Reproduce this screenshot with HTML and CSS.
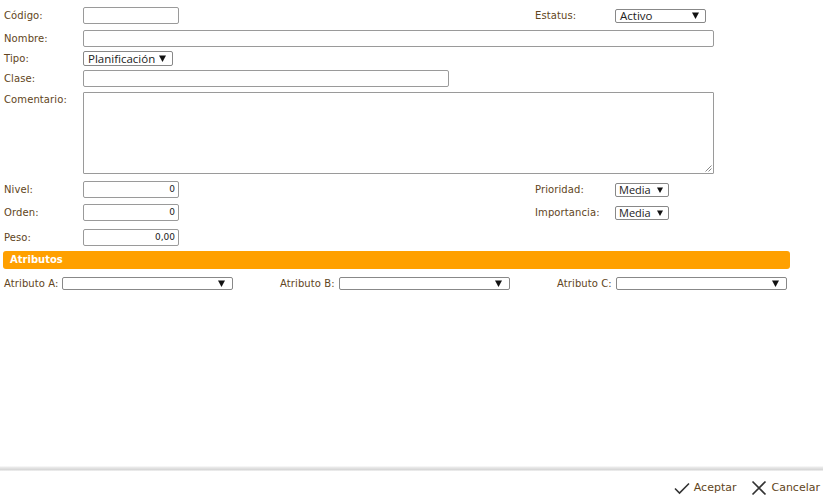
FILE: index.html
```html
<!DOCTYPE html>
<html lang="es">
<head>
<meta charset="utf-8">
<title>Formulario</title>
<link rel="stylesheet" href="styles.css">
</head>
<body>
<div class="page">
  <main class="form">
    <div class="row r1">
      <label class="lbl">Código:</label>
      <div class="cell"><span class="input w96"></span></div>
      <label class="lbl">Estatus:</label>
      <div class="cell"><span class="select w91"><span class="val">Activo</span><svg class="arr" viewBox="0 0 7 7"><path d="M0 0.5H7L3.5 7Z"/></svg></span></div>
    </div>
    <div class="row r2">
      <label class="lbl">Nombre:</label>
      <div class="cell span3"><span class="input w631"></span></div>
    </div>
    <div class="row r3">
      <label class="lbl">Tipo:</label>
      <div class="cell"><span class="select w90 h15"><span class="val">Planificación</span><svg class="arr" viewBox="0 0 7 7"><path d="M0 0.5H7L3.5 7Z"/></svg></span></div>
    </div>
    <div class="row r4">
      <label class="lbl">Clase:</label>
      <div class="cell span3"><span class="input w366"></span></div>
    </div>
    <div class="row r5">
      <label class="lbl top">Comentario:</label>
      <div class="cell span3"><span class="textarea"><svg class="grip" viewBox="0 0 8 8"><path d="M7.5 1.5L1.5 7.5M7.5 4.5L4.5 7.5" stroke="#888" stroke-width="1" fill="none"/></svg></span></div>
    </div>
    <div class="row r6">
      <label class="lbl">Nivel:</label>
      <div class="cell"><span class="input w96 num">0</span></div>
      <label class="lbl">Prioridad:</label>
      <div class="cell"><span class="select w54"><span class="val">Media</span><svg class="arr" viewBox="0 0 7 7"><path d="M0 0.5H7L3.5 7Z"/></svg></span></div>
    </div>
    <div class="row r7">
      <label class="lbl">Orden:</label>
      <div class="cell"><span class="input w96 num">0</span></div>
      <label class="lbl">Importancia:</label>
      <div class="cell"><span class="select w54"><span class="val">Media</span><svg class="arr" viewBox="0 0 7 7"><path d="M0 0.5H7L3.5 7Z"/></svg></span></div>
    </div>
    <div class="row r8">
      <label class="lbl">Peso:</label>
      <div class="cell"><span class="input w96 num">0,00</span></div>
    </div>
    <div class="bar">Atributos</div>
    <div class="attrs">
      <div class="attr a1">
        <label class="lbl2">Atributo A:</label>
        <span class="select w171 h13"><span class="val"></span><svg class="arr" viewBox="0 0 7 7"><path d="M0 0.5H7L3.5 7Z"/></svg></span>
      </div>
      <div class="attr a2">
        <label class="lbl2">Atributo B:</label>
        <span class="select w171 h13"><span class="val"></span><svg class="arr" viewBox="0 0 7 7"><path d="M0 0.5H7L3.5 7Z"/></svg></span>
      </div>
      <div class="attr a3">
        <label class="lbl2">Atributo C:</label>
        <span class="select w171 h13"><span class="val"></span><svg class="arr" viewBox="0 0 7 7"><path d="M0 0.5H7L3.5 7Z"/></svg></span>
      </div>
    </div>
  </main>
  <footer class="footer">
    <div class="actions">
      <span class="btn"><svg class="ico" viewBox="0 0 16 16"><path d="M1 8.5L5.5 13L15 3.5" stroke="#333" stroke-width="1.6" fill="none"/></svg>Aceptar</span>
      <span class="btn"><svg class="ico" viewBox="0 0 16 16"><path d="M1.5 1.5L14.5 14.5M14.5 1.5L1.5 14.5" stroke="#333" stroke-width="1.7" fill="none"/></svg>Cancelar</span>
    </div>
  </footer>
</div>
</body>
</html>
```
FILE: styles.css
```css
html, body {
  margin: 0;
  padding: 0;
  background: #fff;
}
body {
  font-family: "DejaVu Sans", Verdana, sans-serif;
  font-size: 10px;
  letter-spacing: 0.1px;
  color: #614521;
}
.page {
  display: flex;
  flex-direction: column;
  height: 501px;
}
.form {
  flex: 1;
  padding: 7px 0 0 4px;
}
.row {
  display: grid;
  grid-template-columns: 79px 452px 80px auto;
  align-items: center;
}
.row.r2 { margin-top: 6px; }
.row.r3 { margin-top: 3px; }
.row.r4 { margin-top: 3px; }
.row.r5 { margin-top: 5px; align-items: start; }
.row.r6 { margin-top: 7px; }
.row.r7 { margin-top: 6px; }
.row.r8 { margin-top: 8px; }
.span3 { grid-column: 2 / 5; }
.lbl { display: block; line-height: 12px; white-space: nowrap; }
.lbl.top { padding-top: 2px; }
.cell { display: flex; align-items: center; height: 17px; }
.r5 .cell { height: auto; }
.input {
  display: block;
  box-sizing: border-box;
  height: 17px;
  border: 1px solid #9a9a9a;
  border-radius: 2px;
  background: #fff;
  font-size: 9px;
  letter-spacing: 0;
  color: #222;
  line-height: 15px;
  text-align: right;
  padding-right: 3px;
}
.w96 { width: 96px; }
.w631 { width: 631px; }
.w366 { width: 366px; }
.textarea {
  position: relative;
  display: block;
  box-sizing: border-box;
  width: 631px;
  height: 82px;
  border: 1px solid #9a9a9a;
  border-radius: 1px;
  background: #fff;
}
.grip {
  position: absolute;
  right: 1px;
  bottom: 1px;
  width: 8px;
  height: 8px;
}
.select {
  display: flex;
  align-items: center;
  justify-content: space-between;
  box-sizing: border-box;
  height: 14px;
  border: 1px solid #888;
  border-radius: 2px;
  background: #fff;
  padding: 0 6px 0 4px;
  font-family: "Open Sans", "Liberation Sans", sans-serif;
  font-size: 11.5px;
  letter-spacing: 0;
  color: #222;
  line-height: 12px;
}
.select .val { white-space: nowrap; }
.select .arr { width: 7px; height: 7px; fill: #111; flex: none; }
.w91 { width: 91px; }
.w90 { width: 90px; }
.w54 { width: 54px; padding: 0 5px 0 3px; font-size: 11px; }
.w54 .arr { width: 6px; height: 6px; }
.w171 { width: 171px; padding-right: 7px; }
.h15 { height: 15px; }
.h13 { height: 13px; }
.bar {
  box-sizing: border-box;
  width: 787px;
  height: 18px;
  margin: 5px 0 0 -1px;
  background: #ffa000;
  border-radius: 3px;
  color: #fff;
  font-weight: bold;
  font-size: 10px;
  letter-spacing: 0;
  line-height: 18px;
  padding-left: 7px;
}
.attrs {
  display: flex;
  margin-top: 8px;
}
.attr {
  display: flex;
  align-items: center;
  flex: none;
}
.attr.a1 { width: 276px; }
.attr.a2 { width: 277px; }
.lbl2 { flex: none; white-space: nowrap; line-height: 13px; }
.a1 .lbl2 { width: 58px; }
.a2 .lbl2, .a3 .lbl2 { width: 59px; }
.footer {
  height: 35px;
  background: linear-gradient(#fff 0px, #ececec 1px, #d4d4d4 4px, #fff 5px);
  display: flex;
  justify-content: flex-end;
  align-items: flex-start;
}
.actions {
  display: flex;
  gap: 15px;
  padding: 14px 3px 0 0;
}
.btn {
  display: flex;
  align-items: center;
  gap: 4px;
  font-size: 11px;
  letter-spacing: 0;
  color: #614521;
  line-height: 16px;
}
.ico { width: 16px; height: 16px; }
```
